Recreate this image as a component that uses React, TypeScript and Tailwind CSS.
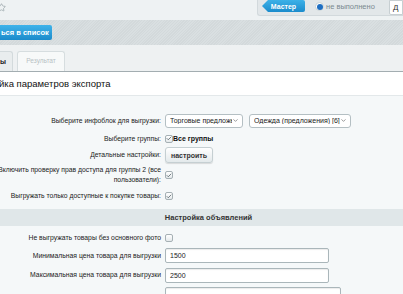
import { Star, ChevronDown, Check } from "lucide-react"

const font = { fontFamily: '"Liberation Sans", Arial, sans-serif' }

function Row({ label, h, children }: { label?: React.ReactNode; h: string; children?: React.ReactNode }) {
  return (
    <div className={`flex items-center gap-[4px] -ml-[44px] ${h}`}>
      <div className="w-[205px] shrink-0 text-right text-[6.8px] leading-[10px] text-[#222]">{label}</div>
      <div className="flex items-center">{children}</div>
    </div>
  )
}

function Checkbox({ checked }: { checked?: boolean }) {
  return (
    <span className="inline-flex w-[8px] h-[8px] items-center justify-center rounded-[2px] border border-[#a5b0b4] bg-gradient-to-b from-white to-[#e4e9eb]">
      {checked && <Check size={7} strokeWidth={3} className="text-[#4c5a60]" />}
    </span>
  )
}

function Select({ text, width }: { text: string; width: string }) {
  return (
    <div className={`${width} h-[14px] flex items-center justify-between rounded-[3px] border border-[#b4bfc3] bg-white pl-[4px] pr-[3px] text-[7px] text-[#222] overflow-hidden whitespace-nowrap`}>
      <span className="overflow-hidden">{text}</span>
      <ChevronDown size={7} className="text-[#555] shrink-0" />
    </div>
  )
}

function Input({ value, width }: { value?: string; width: string }) {
  return (
    <div className={`${width} h-[15px] flex items-center rounded-[2px] border border-[#aab6ba] bg-white px-[4px] text-[7px] text-[#222] shadow-[inset_0_1px_1px_rgba(0,0,0,0.08)]`}>
      {value}
    </div>
  )
}

export default function App() {
  return (
    <div className="w-[403px] h-[294px] overflow-hidden bg-[#f5f8f9] leading-none" style={font}>
      {/* top bar */}
      <div className="h-[20px] bg-[#eef2f3] flex justify-between">
        <div className="pt-[3px] -ml-[3px]">
          <Star size={9} className="text-[#9aa5a9]" />
        </div>
        <div className="w-[146px] h-[16px] bg-[#e2e7e9] border-l border-b border-[#d2d9dc] rounded-bl-[3px] flex items-start pl-[4px]">
          <div className="h-[12px] w-[43px] bg-gradient-to-b from-[#3cb1e8] to-[#1a8ccc] text-white text-[7px] font-bold flex items-center justify-center [clip-path:polygon(6px_0,100%_0,100%_100%,6px_100%,0_50%)] rounded-r-[2px]">
            Мастер
          </div>
          <div className="flex items-center h-[13px] ml-[10px] gap-[2px]">
            <span className="w-[9px] h-[9px] rounded-full bg-white border border-[#c9d2d5] flex items-center justify-center">
              <span className="w-[6px] h-[6px] rounded-full bg-[#1e6fc2]" />
            </span>
            <span className="text-[7.5px] text-[#7a8a90]">не выполнено</span>
          </div>
          <div className="ml-auto h-[15px] w-[14px] bg-white border border-[#c7cfd2] rounded-bl-[2px] text-[8px] text-[#333] pl-[3px] leading-[13px]">
            Д
          </div>
        </div>
      </div>

      {/* action band */}
      <div className="h-[25px] bg-[repeating-linear-gradient(135deg,#d3d9db_0px,#d3d9db_1px,#d9dfe1_1px,#d9dfe1_2px)] flex items-center">
        <div className="h-[15px] w-[52px] bg-gradient-to-b from-[#3fb3ea] to-[#1a8bcb] rounded-r-[2px] text-white text-[7.5px] font-bold flex items-center pl-[1px] whitespace-nowrap">
          ься в список
        </div>
      </div>

      {/* tabs */}
      <div className="h-[27px] bg-[#eef1f2] flex items-end gap-[4px] border-b border-[#a3adb1]">
        <div className="w-[13px] h-[20px] bg-[#e9edee] border-r border-t border-[#d3dadc] rounded-tr-[3px] text-[7px] font-bold text-[#222] flex items-center">
          ы
        </div>
        <div className="w-[48px] h-[20px] bg-[#f7f9f9] border border-b-0 border-[#d6dddf] rounded-t-[3px] text-[6.5px] text-[#b8c1c4] flex items-center justify-center">
          Результат
        </div>
      </div>

      {/* title */}
      <div className="h-[24px] bg-white border-b border-[#e3e8ea] flex items-center">
        <div className="text-[9.5px] text-[#111] -ml-[1px] whitespace-nowrap">йка параметров экспорта</div>
      </div>

      {/* form */}
      <div className="pt-[15px]">
        <Row h="h-[19px]" label="Выберите инфоблок для выгрузки:">
          <div className="flex gap-[6px]">
            <Select text="Торговые предложе" width="w-[78px]" />
            <Select text="Одежда (предложения) [6]" width="w-[102px]" />
          </div>
        </Row>
        <Row h="h-[17px]" label="Выберите группы:">
          <Checkbox checked />
          <span className="text-[7px] font-bold text-[#111]">Все группы</span>
        </Row>
        <Row h="h-[16px]" label="Детальные настройки:">
          <div className="w-[48px] h-[16px] rounded-[3px] border border-[#c5cfd2] bg-gradient-to-b from-white to-[#e3e9eb] shadow-[0_1px_1px_rgba(0,0,0,0.12)] text-[7px] font-bold text-[#333] flex items-center justify-center">
            настроить
          </div>
        </Row>
        <Row h="h-[24px]" label="Включить проверку прав доступа для группы 2 (все пользователи):">
          <Checkbox checked />
        </Row>
        <Row h="h-[18px]" label="Выгружать только доступные к покупке товары:">
          <Checkbox checked />
        </Row>
      </div>

      <div className="mt-[4px] h-[17px] bg-[#e0e7e9] text-[7.5px] font-bold text-[#333] flex items-center justify-center">
        <span className="pl-[14px]">Настройка объявлений</span>
      </div>

      <div className="pt-[4px]">
        <Row h="h-[16px]" label="Не выгружать товары без основного фото">
          <Checkbox />
        </Row>
        <Row h="h-[19px]" label="Минимальная цена товара для выгрузки">
          <Input value="1500" width="w-[164px]" />
        </Row>
        <Row h="h-[20px]" label="Максимальная цена товара для выгрузки">
          <Input value="2500" width="w-[164px]" />
        </Row>
        <div className="pl-[165px] pt-[2px]">
          <Input width="w-[176px]" />
        </div>
      </div>
    </div>
  )
}
